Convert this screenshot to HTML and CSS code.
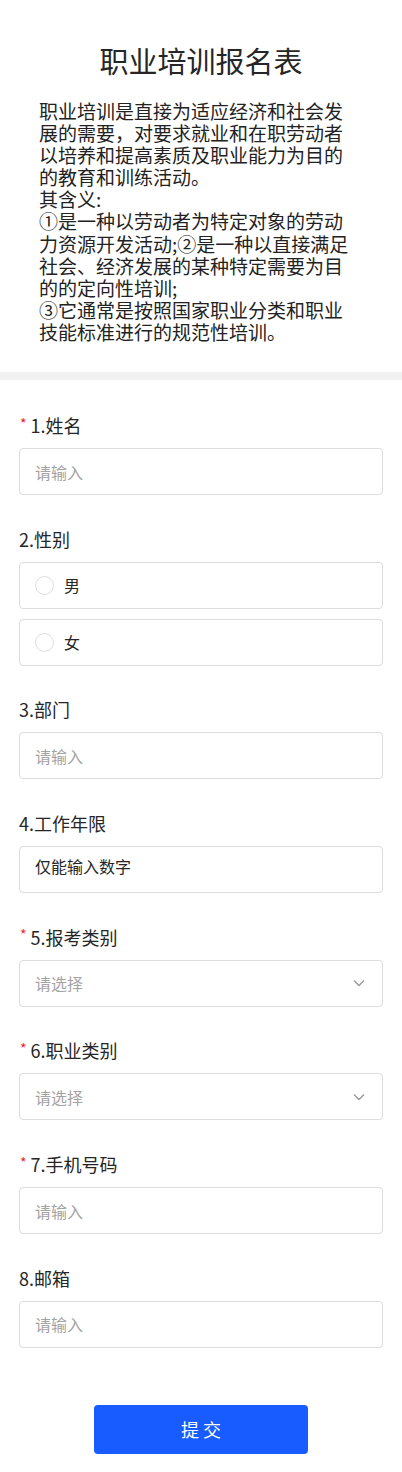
FILE: index.html
```html
<!DOCTYPE html>
<html lang="zh-CN">
<head>
<meta charset="UTF-8" />
<meta name="viewport" content="width=device-width, initial-scale=1" />
<title>职业培训报名表</title>
<link rel="stylesheet" href="styles.css">
</head>
<body>

<header class="intro">
  <h1 class="title">职业培训报名表</h1>
  <p class="desc">职业培训是直接为适应经济和社会发展的需要，对要求就业和在职劳动者以培养和提高素质及职业能力为目的的教育和训练活动。<br>其含义:<br>①是一种以劳动者为特定对象的劳动力资源开发活动;②是一种以直接满足社会、经济发展的某种特定需要为目的的定向性培训;<br>③它通常是按照国家职业分类和职业技能标准进行的规范性培训。</p>
</header>

<div class="divider"></div>

<form class="form">
  <div class="field">
    <label class="label"><span class="req">*</span>1.姓名</label>
    <input class="box" type="text" placeholder="请输入" />
  </div>

  <div class="field">
    <label class="label">2.性别</label>
    <div class="box option"><span class="radio"></span>男</div>
    <div class="box option"><span class="radio"></span>女</div>
  </div>

  <div class="field">
    <label class="label">3.部门</label>
    <input class="box" type="text" placeholder="请输入" />
  </div>

  <div class="field">
    <label class="label">4.工作年限</label>
    <textarea class="box area" placeholder="仅能输入数字"></textarea>
  </div>

  <div class="field">
    <label class="label"><span class="req">*</span>5.报考类别</label>
    <div class="box select">
      <span class="ph">请选择</span>
      <svg class="arrow" width="12" height="8" viewBox="0 0 12 8"><path d="M1 1.5l5 5 5-5" fill="none" stroke="#999" stroke-width="1.4"/></svg>
    </div>
  </div>

  <div class="field">
    <label class="label"><span class="req">*</span>6.职业类别</label>
    <div class="box select">
      <span class="ph">请选择</span>
      <svg class="arrow" width="12" height="8" viewBox="0 0 12 8"><path d="M1 1.5l5 5 5-5" fill="none" stroke="#999" stroke-width="1.4"/></svg>
    </div>
  </div>

  <div class="field">
    <label class="label"><span class="req">*</span>7.手机号码</label>
    <input class="box" type="text" placeholder="请输入" />
  </div>

  <div class="field">
    <label class="label">8.邮箱</label>
    <input class="box" type="text" placeholder="请输入" />
  </div>

  <div class="actions">
    <button type="button" class="submit">提 交</button>
  </div>
</form>

</body>
</html>
```

FILE: styles.css
```css
body {
  margin: 0;
  background: #fff;
  font-family: "Noto Sans CJK SC", "Noto Sans", sans-serif;
  color: #262626;
}

/* intro */
.intro {
  padding: 40px 0 29px;
}
.title {
  margin: 0;
  font-size: 29px;
  line-height: 40px;
  font-weight: 400;
  text-align: center;
  color: #262626;
}
.desc {
  margin: 20px 0 0 39px;
  width: 316px;
  font-size: 19px;
  line-height: 22.1px;
  color: #222;
}

.divider {
  height: 8px;
  background: #f1f1f1;
}

/* form */
.form {
  padding: 32px 19px 19px;
}
.field {
  display: flex;
  flex-direction: column;
  gap: 10px;
  margin-bottom: 30.7px;
}
.label {
  display: flex;
  align-items: center;
  height: 26px;
  font-size: 18px;
  line-height: 26px;
  color: #262626;
}
.req {
  color: #f5222d;
  font-size: 14px;
  line-height: 14px;
  margin: -5px 4px 0 1px;
}
.box {
  box-sizing: border-box;
  width: 100%;
  height: 47px;
  margin: 0;
  padding: 0 15px;
  border: 1px solid #dcdcdc;
  border-radius: 4px;
  background: #fff;
  font-family: inherit;
  font-size: 16px;
  color: #262626;
  outline: none;
}
.box::placeholder {
  color: #a3a3a3;
}
.area {
  display: block;
  padding-top: 7px;
  line-height: 24px;
  resize: none;
}
.area::placeholder {
  color: #262626;
}
.option {
  display: flex;
  align-items: center;
  gap: 10px;
}
.radio {
  width: 17px;
  height: 17px;
  border: 1px solid #dedede;
  border-radius: 50%;
}
.select {
  display: flex;
  align-items: center;
  justify-content: space-between;
}
.select .ph {
  color: #a3a3a3;
}
.arrow {
  margin-right: 2px;
}

.actions {
  display: flex;
  justify-content: center;
  padding-top: 26px;
}
.submit {
  width: 214px;
  height: 49px;
  border: none;
  border-radius: 4px;
  background: #185cff;
  color: #fff;
  font-family: inherit;
  font-size: 18px;
  cursor: pointer;
}
```
